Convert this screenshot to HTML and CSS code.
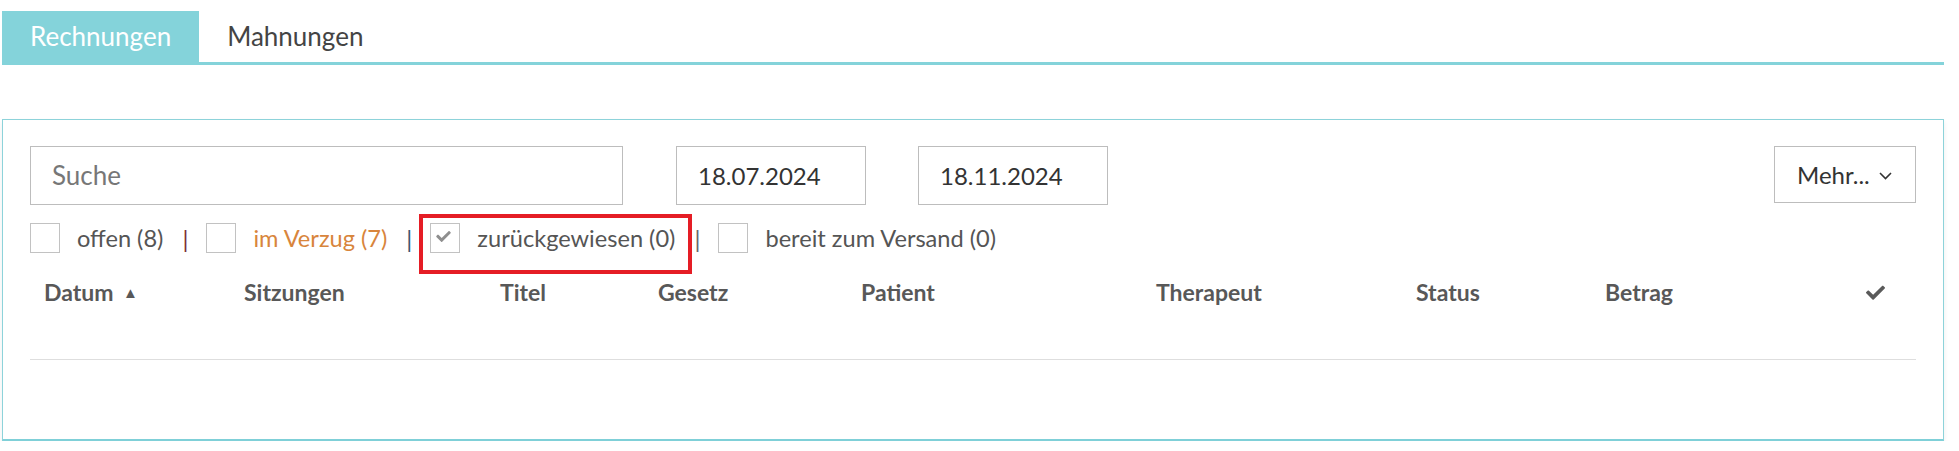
FILE: index.html
```html
<!DOCTYPE html>
<html lang="de">
<head>
<meta charset="utf-8">
<title>Rechnungen</title>
<link rel="stylesheet" href="styles.css">
</head>
<body>
<div class="page">
  <nav class="tabs">
    <a class="tab tab-active">Rechnungen</a>
    <a class="tab">Mahnungen</a>
  </nav>

  <section class="panel">
    <div class="toolbar">
      <div class="field field-search placeholder">Suche</div>
      <div class="field field-date">18.07.2024</div>
      <div class="field field-date">18.11.2024</div>
      <div class="toolbar-spacer"></div>
      <button class="more">Mehr...
        <svg class="chev" width="13" height="8" viewBox="0 0 13 8"><polyline points="1,1 6.5,6.5 12,1" fill="none" stroke="#333" stroke-width="1.6"/></svg>
      </button>
    </div>

    <div class="filters">
      <label class="filter"><span class="box"></span><span class="filter-text">offen (8)</span></label>
      <span class="sep sep-red">|</span>
      <label class="filter"><span class="box"></span><span class="filter-text filter-late">im Verzug (7)</span></label>
      <span class="sep sep-blue">|</span>
      <label class="filter filter-marked"><span class="box"><svg class="tick" width="15" height="12" viewBox="0 0 512 420"><path fill="#8f8f8f" d="M173.9 409.4l-166.4-166.4c-10-10-10-26.2 0-36.2l36.2-36.2c10-10 26.2-10 36.2 0L192 282.7 432.1 42.6c10-10 26.2-10 36.2 0l36.2 36.2c10 10 10 26.2 0 36.2l-294.4 294.4c-10 10-26.2 10-36.2 0z"/></svg></span><span class="filter-text">zurückgewiesen (0)</span><span class="mark"></span></label>
      <span class="sep sep-grey">|</span>
      <label class="filter"><span class="box"></span><span class="filter-text">bereit zum Versand (0)</span></label>
    </div>

    <div class="thead">
      <div class="th">Datum <span class="sort">&#9650;</span></div>
      <div class="th">Sitzungen</div>
      <div class="th">Titel</div>
      <div class="th">Gesetz</div>
      <div class="th">Patient</div>
      <div class="th">Therapeut</div>
      <div class="th">Status</div>
      <div class="th">Betrag</div>
      <div class="th th-check"><svg width="19" height="15" viewBox="0 0 512 400"><path fill="#5a5a5a" d="M173.9 389.4l-166.4-166.4c-10-10-10-26.2 0-36.2l36.2-36.2c10-10 26.2-10 36.2 0L192 262.7 432.1 22.6c10-10 26.2-10 36.2 0l36.2 36.2c10 10 10 26.2 0 36.2l-294.4 294.4c-10 10-26.2 10-36.2 0z"/></svg></div>
    </div>
  </section>
</div>
</body>
</html>
```

FILE: styles.css
```css
* { box-sizing: border-box; }

html, body {
  margin: 0;
  padding: 0;
  background: #fff;
}

body {
  font-family: Lato, "Open Sans", "Liberation Sans", sans-serif;
  color: #444;
}

.page {
  width: 1942px;
  margin-left: 2px;
  padding-top: 11px;
}

/* Tabs */
.tabs {
  display: flex;
  border-bottom: 3px solid #84d3da;
}

.tab {
  height: 51px;
  line-height: 51px;
  padding: 0 28px 0 28px;
  font-size: 26px;
  color: #444;
  text-decoration: none;
}

.tab-active {
  background: #84d3da;
  color: #fff;
}

/* Panel */
.panel {
  margin-top: 54px;
  border: 1px solid #8dd3da;
  border-bottom: 2px solid #7fd0d8;
  box-shadow: 0 3px 5px rgba(0, 0, 0, 0.07);
  padding: 26px 27px 79px 27px;
}

.toolbar {
  display: flex;
  align-items: flex-start;
}

.field {
  height: 59px;
  border: 1px solid #bdbdbd;
  font-size: 24px;
  line-height: 57px;
  color: #333;
}

.field-search {
  width: 593px;
  padding-left: 21px;
  font-size: 26px;
}

.placeholder {
  color: #777;
}

.field-date {
  width: 190px;
  padding-left: 21px;
}

.field-search + .field-date {
  margin-left: 53px;
}

.field-date + .field-date {
  margin-left: 52px;
}

.toolbar-spacer {
  flex: 1;
}

.more {
  height: 57px;
  width: 142px;
  border: 1px solid #bdbdbd;
  background: #fff;
  font-family: inherit;
  font-size: 24px;
  color: #333;
  padding: 0 0 0 22px;
  display: flex;
  align-items: center;
  gap: 9px;
  cursor: pointer;
}

.chev {
  margin-top: 2px;
}

/* Filters */
.filters {
  margin-top: 18px;
  display: flex;
  align-items: center;
  height: 30px;
}

.filter {
  position: relative;
  display: flex;
  align-items: center;
  font-size: 23.6px;
  color: #555;
}

.box {
  width: 30px;
  height: 30px;
  border: 1px solid #c2c2c2;
  background: #fff;
  display: flex;
  align-items: center;
  justify-content: center;
}

.tick {
  margin: -5px 0 0 -3px;
}

.filter-text {
  margin-left: 17px;
}

.filter-late {
  color: #d8853c;
}

.mark {
  position: absolute;
  left: -11px;
  top: -9px;
  right: -17px;
  bottom: -21px;
  border: 4px solid #e51d25;
  pointer-events: none;
}

.sep {
  font-size: 24px;
  margin: 0 18px 0 19px;
}

.sep-red { color: #7b2f34; }
.sep-blue { color: #3b5470; }
.sep-grey { color: #666; }

/* Table head */
.thead {
  display: grid;
  grid-template-columns: 200px 256px 158px 203px 295px 260px 189px 1fr auto;
  padding: 24px 0 52px 0;
  border-bottom: 1px solid #dedede;
}

.th {
  padding-left: 14px;
  font-size: 23px;
  font-weight: 700;
  line-height: 30px;
  color: #585858;
  white-space: nowrap;
}

.sort {
  font-size: 15px;
  vertical-align: 3px;
  margin-left: 4px;
}

.th-check {
  padding: 0 31px 0 0;
  display: flex;
  align-items: center;
}
```
